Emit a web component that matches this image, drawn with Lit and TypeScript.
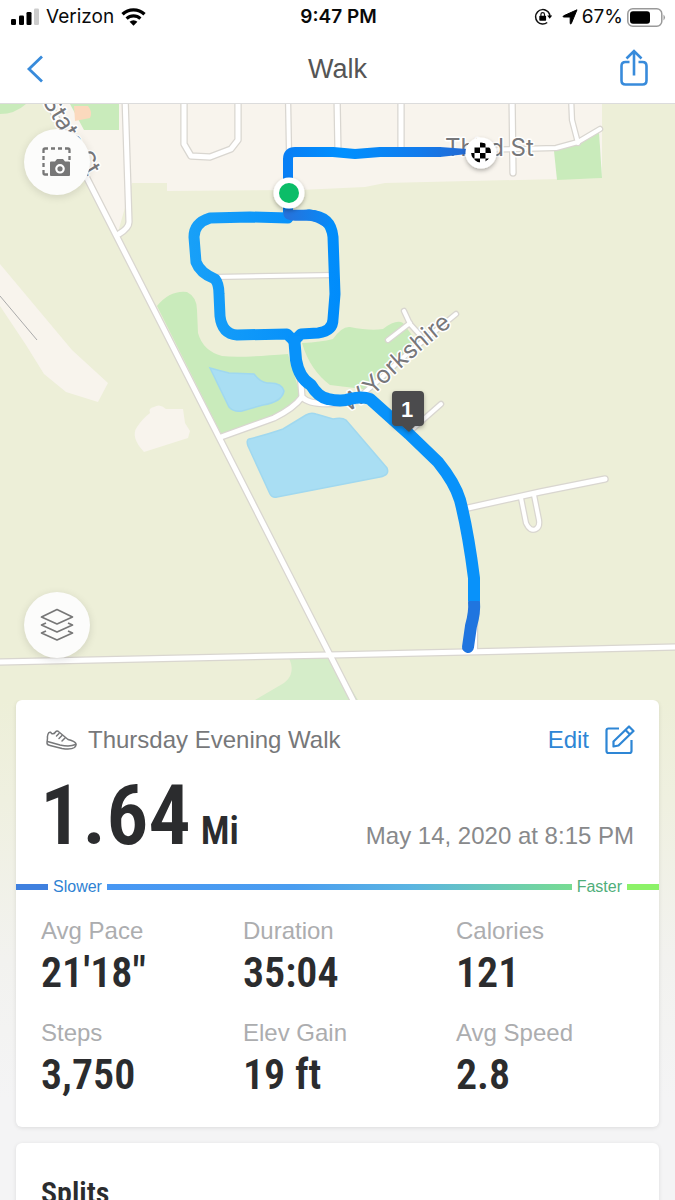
import { LitElement, html, css, svg } from "lit";
import { customElement, property, state } from "lit/decorators.js";

interface Stat {
  label: string;
  value: string;
}

const STATS: Stat[] = [
  { label: "Avg Pace", value: "21'18\"" },
  { label: "Duration", value: "35:04" },
  { label: "Calories", value: "121" },
  { label: "Steps", value: "3,750" },
  { label: "Elev Gain", value: "19 ft" },
  { label: "Avg Speed", value: "2.8" },
];

@customElement("status-bar")
export class StatusBar extends LitElement {
  static styles = css`
    :host {
      display: grid;
      grid-template-columns: 1fr auto 1fr;
      align-items: center;
      height: 34px;
      padding: 0 9px 0 11px;
      font: 400 19px/24px Inter, "Liberation Sans", sans-serif;
      color: #0a0a0a;
      background: #fff;
    }
    .side {
      display: flex;
      align-items: center;
      gap: 7px;
    }
    .end {
      justify-content: flex-end;
      gap: 4px;
    }
    .time {
      font-weight: 600;
    }
    .lock {
      margin-right: 6px;
    }
    svg {
      display: block;
      flex: none;
    }
  `;

  render() {
    return html`
      <div class="side">
        <svg width="28" height="18" viewBox="0 0 28 18" aria-label="Signal">
          <rect x="0" y="11" width="5" height="6" rx="1.3" />
          <rect x="8" y="7.500" width="5" height="9.500" rx="1.300" />
          <rect x="15.500" y="4" width="5" height="13" rx="1.300" />
          <rect x="23" y="0.500" width="5" height="16.500" rx="1.300" fill="#ccc" />
        </svg>
        <span>Verizon</span>
        <svg width="25" height="19" viewBox="0 0 25 19" aria-label="Wi-Fi" fill="none" stroke="#000">
          <path d="M1.500 6.300a15.800 15.800 0 0 1 22 0" stroke-width="3.300" />
          <path d="M5.600 10.600a10 10 0 0 1 13.800 0" stroke-width="3.100" />
          <path d="M8.600 13.800a5.800 5.800 0 0 1 7.800 0L12.500 17.800z" fill="#000" stroke="none" />
        </svg>
      </div>
      <span class="time">9:47 PM</span>
      <div class="side end">
        <svg class="lock" width="18" height="18" viewBox="0 0 18 18" aria-label="Rotation lock">
          <path d="M13.200 3.100A7.200 7.200 0 1 0 13.200 14.500M10 1.800A7.200 7.200 0 0 1 15.900 8.500" fill="none" stroke="#111" stroke-width="1.500" />
          <path d="M13.200 7.600h5l-2.500 3.200z" />
          <rect x="5.300" y="7.800" width="6.800" height="5" rx="0.700" />
          <path d="M6.900 8V6.500a1.800 1.800 0 0 1 3.600 0V8" fill="none" stroke="#111" stroke-width="1.200" />
        </svg>
        <svg width="16" height="16" viewBox="0 0 16 16" aria-label="Location">
          <path d="M15 0.800 9.300 14.500Q8.600 15.800 8.200 14.200V8H1.800Q0.200 7.600 1.600 6.800z" stroke="#000" stroke-linejoin="round" />
        </svg>
        <span>67%</span>
        <svg width="39" height="19" viewBox="0 0 39 19" aria-label="Battery">
          <rect x="0.800" y="0.800" width="34" height="17.400" rx="5" fill="none" stroke="#999" stroke-width="1.500" />
          <rect x="3" y="3.200" width="20" height="12.600" rx="3" />
          <path d="M36.500 6.500q3 3 0 6z" fill="#999" />
        </svg>
      </div>
    `;
  }
}

@customElement("nav-bar")
export class NavBar extends LitElement {
  @property() heading = "";

  static styles = css`
    :host {
      display: grid;
      grid-template-columns: 1fr auto 1fr;
      align-items: center;
      height: 69px;
      padding: 0 24px;
      background: #fff;
      border-bottom: 1px solid #dcdcdc;
      font-family: "Liberation Sans", Arial, sans-serif;
    }
    h1 {
      margin: 0;
      font-size: 27px;
      line-height: 32px;
      font-weight: 400;
      color: #555;
    }
    button {
      display: block;
      padding: 0;
      border: 0;
      background: none;
      color: #388bdb;
      cursor: pointer;
    }
    .share {
      justify-self: end;
    }
    svg {
      display: block;
      fill: none;
      stroke: currentColor;
    }
  `;

  render() {
    return html`
      <button aria-label="Back">
        <svg width="24" height="30" viewBox="0 0 24 30" stroke-width="2.800">
          <path d="M18 2.500 5 15 18 27.500" />
        </svg>
      </button>
      <h1>${this.heading}</h1>
      <button class="share" aria-label="Share">
        <svg width="32" height="40" viewBox="0 0 32 40" stroke-width="2.600">
          <path d="M10.500 13H6.500q-4 0-4 4v14.500q0 4 4 4h17q4 0 4-4V17q0-4-4-4h-4" />
          <path d="M15 26.500V2.500M7.500 9.500 15 2l7.500 7.500" />
        </svg>
      </button>
    `;
  }
}

const ROADS: { d: string; w: number }[] = [
  { d: "M125 96 L129 222 Q129 228 119 234", w: 5 },
  { d: "M184 96 V144 L191 156 L210 157 L231 149 L238 140 V96", w: 5 },
  { d: "M288 96 L289 152", w: 4 },
  { d: "M337 96 L338 152", w: 5 },
  { d: "M401 96 L401 152", w: 5 },
  { d: "M512 96 L513 173", w: 5 },
  { d: "M571 96 L572 120 L578 143", w: 4 },
  { d: "M475 150 L556 148 L578 142 L600 129", w: 4 },
  { d: "M215 277 L335 275", w: 4 },
  { d: "M404 311 L410 324 L420 335 M410 323 L388 340", w: 4 },
  { d: "M360 396 Q380 380 400 360 L456 314", w: 4 },
  { d: "M408 433 L441 404", w: 4 },
  { d: "M300 372 L302 397 Q310 406 340 403 Q358 402 370 396", w: 5 },
  { d: "M221 437 L274 418 Q294 408 302 397", w: 5 },
  { d: "M468 508 L540 492 L605 479", w: 5 },
  { d: "M521 498 L526 523 Q530 532 536 529 Q540 527 539 520 L534 495", w: 4 },
  { d: "M475 590 L475 650", w: 4 },
  { d: "M-4 662 L330 655 L680 647", w: 5 },
  { d: "M40 86 L330 655 L358 710", w: 5 },
];

@customElement("route-map")
export class RouteMap extends LitElement {
  @state() private layersOpen = false;

  static styles = css`
    :host {
      display: block;
      position: relative;
      background: #edefd8;
    }
    .map {
      display: block;
      width: 100%;
      height: auto;
    }
    .casing {
      fill: none;
      stroke: #d9d6d0;
      stroke-linecap: round;
      stroke-linejoin: round;
    }
    .road {
      fill: none;
      stroke: #fff;
      stroke-linecap: round;
      stroke-linejoin: round;
    }
    .urban {
      fill: #f8f4ed;
    }
    .park {
      fill: #c9ebbb;
    }
    .water {
      fill: #a9def3;
      stroke: #a0d8ef;
      stroke-width: 1.5;
    }
    .route {
      fill: none;
      stroke: #0892fa;
      stroke-width: 11;
      stroke-linecap: round;
      stroke-linejoin: round;
    }
    .route-finish {
      stroke: url(#finish);
      stroke-width: 10;
      stroke-linecap: butt;
    }
    .route-loop {
      stroke: url(#loop);
    }
    .route-restart {
      stroke: url(#restart);
    }
    .route-main {
      stroke-width: 12;
      stroke-linecap: butt;
    }
    .route-slow {
      stroke: #2075df;
      stroke-width: 12;
    }
    .place {
      font: 24px Inter, "Liberation Sans", sans-serif;
      fill: #77777a;
      stroke: #fff;
      stroke-width: 3;
      stroke-linejoin: round;
      paint-order: stroke;
    }
    .mile {
      font: 700 22px "Liberation Sans", Arial, sans-serif;
      fill: #fff;
      text-anchor: middle;
    }
    .fab {
      position: absolute;
      left: 24px;
      display: grid;
      place-items: center;
      width: 66px;
      height: 66px;
      padding: 0;
      border: 0;
      border-radius: 50%;
      background: #fcfcfb;
      color: #777;
      box-shadow: 0 2px 8px rgba(0, 0, 0, 0.12);
      cursor: pointer;
    }
    .snapshot {
      top: 25px;
    }
    .layers {
      bottom: 42px;
    }
    .fab svg {
      display: block;
    }
  `;

  render() {
    return html`
      <svg class="map" viewBox="0 104 675 596" role="img" aria-label="Map of the walk">
        <defs>
          <linearGradient id="finish" gradientUnits="userSpaceOnUse" x1="288" y1="0" x2="470" y2="0">
            <stop offset="0" stop-color="#087ff5" />
            <stop offset="0.300" stop-color="#0090ff" />
            <stop offset="0.720" stop-color="#127bec" />
            <stop offset="1" stop-color="#2569d2" />
          </linearGradient>
          <linearGradient id="loop" gradientUnits="userSpaceOnUse" x1="190" y1="0" x2="340" y2="0">
            <stop offset="0" stop-color="#18a0f8" />
            <stop offset="0.700" stop-color="#0791fa" />
            <stop offset="1" stop-color="#008cfb" />
          </linearGradient>
          <linearGradient id="restart" gradientUnits="userSpaceOnUse" x1="288" y1="0" x2="330" y2="0">
            <stop offset="0" stop-color="#2573dc" />
            <stop offset="1" stop-color="#0889f7" />
          </linearGradient>
          <path id="yorkshire" d="M347 412 Q365 403 377 392 Q413 355 466 314" />
          <filter id="shadow" x="-50%" y="-50%" width="200%" height="200%">
            <feDropShadow dx="0" dy="2" stdDeviation="2" flood-opacity="0.300" />
          </filter>
        </defs>
        <rect x="0" y="104" width="675" height="596" fill="#edefd8" />
        <path class="urban" d="M48 104H602V178L385 183 365 187 300 190 167 191V183H132L118 232Z" />
        <path class="urban" d="M0 264 L72 350 L108 383 L98 402 L66 392 L44 374 L26 345 L0 306Z" />
        <path class="urban" d="M150 413 Q148 408 154 407 Q160 403 166 409 L183 409 185 423 190 431 188 438 144 452 Q130 437 137 427 Q143 418 150 413Z" />
        <path d="M0 296 L37 340" stroke="#aaa" stroke-width="1" />
        <path class="park" d="M80 104H119V130H84L70 104Z" />
        <path class="park" d="M0 104H26Q15 114 0 114Z" />
        <path d="M74 106 H88 Q93 112 90 118 L75 121Z" fill="#fbd9bd" />
        <path class="park" d="M554 151 L599 132 L602 178 L557 180Z" />
        <path class="park" d="M157 306 Q170 290 187 292 Q197 297 197 310 L198 333 Q203 351 222 356 Q240 358 288 354 L300 394 Q290 410 270 418 L221 434Z" />
        <path class="park" d="M302 343 Q321 342 333 339 Q342 326 350 327 Q370 331 383 329 Q396 319 403 323 L414 338 L412 350 Q391 377 371 390 L330 385 Q310 370 302 343Z" />
        <path d="M288 656 L331 655 L358 700 H255 L284 683 Q297 673 288 656Z" fill="#d5edc9" />
        <path class="water" d="M210 368 Q217 370 229 373 L254 374 Q260 382 267 383 Q282 382 284 391 Q282 402 263 405 L242 411 Q233 412 229 407Z" />
        <path class="water" d="M249 439 Q269 434 283 429 L306 415 Q311 412 316 414 L333 419 Q342 417 346 420 L387 468 Q390 475 380 477 L277 497 Q272 498 270 494 L248 446 Q246 440 249 439Z" />
        ${ROADS.map((r) => svg`<path class="casing" stroke-width=${r.w + 2.5} d=${r.d} />`)}
        ${ROADS.map((r) => svg`<path class="road" stroke-width=${r.w} d=${r.d} />`)}

        <text class="place" transform="translate(42 101) rotate(59)">State St</text>
        <text class="place" x="445" y="156">Third St</text>
        <text class="place"><textPath href="#yorkshire">W Yorkshire</textPath></text>

        <path d="M440 147 L467 149 V154 L440 157Z" fill="url(#finish)" />
        <path class="route route-finish" d="M288 218 V159 Q288 152 295 152 L333 152 L355 154 L380 152 L441 152" />
        <path class="route route-loop" d="M288 218 L250 217 L210 218 Q194 223 194 237 L196 262 Q200 273 215 279 Q219 284 219 294 L220 316 Q222 334 237 335 L287 334 L294 341 L301 334 L318 333 Q333 331 333 319 L335 294 L333 237 Q331 216 309 215" />
        <path class="route route-restart" d="M289 214 Q291 216 309 215 Q318 216 325 221" />
        <path class="route route-slow" d="M474 602 Q475 612 471 626 L468 647" />
        <path class="route route-main" d="M294 336 L296 360 Q299 378 311 385 Q318 397 328 399 Q341 402 350 399 Q362 396 370 399 L409 434 L438 462 Q455 483 460 500 Q468 531 474 578 L474 601" />

        <g filter="url(#shadow)">
          <circle cx="289" cy="193" r="15.500" fill="#fff" />
          <circle cx="481" cy="153" r="15.500" fill="#fff" />
          <path d="M396 391H420Q424 391 424 395V422Q424 426 420 426H415L409 432 402 426H396Q392 426 392 422V395Q392 391 396 391Z" fill="#4b4b4d" />
        </g>
        <circle cx="289" cy="193" r="10" fill="#0bbd68" />
        <clipPath id="flag"><circle cx="481" cy="152.500" r="10" /></clipPath>
        <g clip-path="url(#flag)">
          <rect x="469" y="141" width="24" height="24" fill="#fff" />
          <path d="M480 142h5.500v5.500h-5.500zM474.500 147.500h5.500v5.500h-5.500zM485.500 147.500h5.500v5.500h-5.500zM469 153h5.500v5.500h-5.500zM480 153h5.500v5.500h-5.500zM474.500 158.500h5.500v5.500h-5.500zM485.500 158.500h5.500v5.500h-5.500z" />
        </g>
        <text class="mile" x="407" y="417">1</text>
      </svg>
      <button class="fab snapshot" aria-label="Take map snapshot">
        <svg width="30" height="30" viewBox="0 0 30 30" fill="none" stroke="currentColor">
          <path d="M1.500 6V3q0-1.500 1.500-1.500H6M9 1.500h4M16 1.500h4M23 1.500h3q1.500 0 1.500 1.500V6M1.500 9v4M1.500 16v4M1.500 23v3q0 1.500 1.500 1.500H6M27.500 9v4" stroke-width="2.300" />
          <path d="M8 15.500q0-1 1-1h4l2-2.500h6l2 2.500h4q1 0 1 1V28q0 1-1 1H9q-1 0-1-1z" fill="currentColor" stroke="none" />
          <circle cx="18" cy="21.800" r="3.700" stroke="#fff" stroke-width="2.200" />
        </svg>
      </button>
      <button
        class="fab layers"
        aria-label="Map layers"
        aria-pressed=${this.layersOpen ? "true" : "false"}
        @click=${() => (this.layersOpen = !this.layersOpen)}
      >
        <svg width="34" height="34" viewBox="0 0 34 34" fill="none" stroke="currentColor" stroke-width="1.700" stroke-linejoin="round">
          <path d="M17 1.500 32.500 9 17 16 1.500 9z" />
          <path d="M6 15 1.500 17 17 24 32.500 17 28 15" />
          <path d="M6 23 1.500 25 17 32 32.500 25 28 23" />
        </svg>
      </button>
    `;
  }
}

@customElement("summary-card")
export class SummaryCard extends LitElement {
  static styles = css`
    :host {
      display: block;
      padding-bottom: 26px;
      border-radius: 6px;
      background: #fff;
      box-shadow: 0 1px 4px rgba(0, 0, 0, 0.1);
      color: #2b2c2e;
      font-family: "Liberation Sans", Arial, sans-serif;
    }
    .title-row {
      display: flex;
      align-items: center;
      justify-content: space-between;
      padding: 24px 24px 0 30px;
    }
    .title {
      display: flex;
      align-items: center;
      gap: 11px;
    }
    h2 {
      margin: 0;
      font-size: 24px;
      line-height: 32px;
      font-weight: 400;
      color: #77787a;
    }
    .edit {
      display: flex;
      align-items: center;
      gap: 16px;
      padding: 0;
      border: 0;
      background: none;
      font: 400 24px/32px "Liberation Sans", Arial, sans-serif;
      color: #2e86d5;
      cursor: pointer;
    }
    svg {
      display: block;
      fill: none;
      stroke: currentColor;
    }
    .shoe {
      color: #77787a;
    }
    .distance-row {
      display: flex;
      align-items: baseline;
      justify-content: space-between;
      padding: 18px 25px 0 24px;
    }
    .distance {
      display: flex;
      align-items: baseline;
      gap: 10px;
      margin: 0;
      font: 600 84px/84px "Roboto Condensed", Roboto, sans-serif;
    }
    .unit {
      font-size: 38px;
    }
    time {
      font-size: 24px;
      color: #88898b;
    }
    .scale {
      display: flex;
      align-items: center;
      gap: 5px;
      margin-top: 4px;
      font-size: 16px;
      line-height: 20px;
      color: #2f82d3;
    }
    .bar {
      height: 6px;
      width: 32px;
      background: #3f80df;
    }
    .mid {
      flex: 1;
      background: linear-gradient(90deg, #4897f3, #4a9df0 40%, #5ab4e2 65%, #77dc92);
    }
    .fastest {
      background: #8cf268;
    }
    .faster {
      color: #4fae7a;
    }
    .stats {
      display: grid;
      grid-template-columns: 202fr 213fr 178fr;
      row-gap: 20px;
      margin: 0;
      padding: 20px 25px 0;
    }
    dt {
      font-size: 24px;
      line-height: 28px;
      color: #acadaf;
    }
    dd {
      margin: 2px 0 0;
      font: 600 42px/52px "Roboto Condensed", Roboto, sans-serif;
    }
  `;

  render() {
    return html`
      <div class="title-row">
        <div class="title">
          <svg class="shoe" width="31" height="20" viewBox="0 0 31 20" stroke-width="1.500" stroke-linejoin="round" stroke-linecap="round">
            <path d="M3 2.500Q1 5 1.500 8L1 13Q1 15 4 15.500L16 18.500Q25 20 28.500 17.500Q31 15 29.500 13Q28 11 22 9.500L13 2Q11 0 9.500 2Q8 4.500 5.500 3.500Q4.500 1.500 3 2.500Z" />
            <path d="M1.500 11.500 14 15Q24 17 29.500 14.500M10.500 6 13 3.500M13 8.500 16 5.500M16 11 19 8" />
          </svg>
          <h2>Thursday Evening Walk</h2>
        </div>
        <button class="edit">
          Edit
          <svg width="30" height="30" viewBox="0 0 30 30" stroke-width="2.200" stroke-linejoin="round">
            <path d="M14 3.500H3.500q-2 0-2 2v20.500q0 2 2 2H24.500q2 0 2-2V15" />
            <path d="M8.500 21.500v-5L24 1.500 28.500 6 13.500 20.500zM20.500 5l4.500 4.500" />
          </svg>
        </button>
      </div>
      <div class="distance-row">
        <p class="distance">1.64 <span class="unit">Mi</span></p>
        <time datetime="2020-05-14T20:15">May 14, 2020 at 8:15 PM</time>
      </div>
      <div class="scale">
        <span class="bar"></span>
        <span>Slower</span>
        <span class="bar mid"></span>
        <span class="faster">Faster</span>
        <span class="bar fastest"></span>
      </div>
      <dl class="stats">
        ${STATS.map((s) => html`<div><dt>${s.label}</dt><dd>${s.value}</dd></div>`)}
      </dl>
    `;
  }
}

@customElement("app-root")
export class AppRoot extends LitElement {
  static styles = css`
    :host {
      display: flex;
      flex-direction: column;
      height: 100vh;
      overflow: hidden;
      background: #f4f4f5;
    }
    status-bar,
    nav-bar {
      flex: none;
    }
    main {
      flex: 1;
      min-height: 0;
      overflow-y: auto;
      scrollbar-width: none;
    }
    .cards {
      display: flex;
      flex-direction: column;
      gap: 16px;
      padding: 0 16px 16px;
      background: linear-gradient(#edefd8, #eff0e0 100px, #f2f2ef 260px, #f4f4f5 400px);
    }
    .splits {
      padding: 34px 25px;
      border-radius: 6px;
      background: #fff;
      box-shadow: 0 1px 4px rgba(0, 0, 0, 0.1);
    }
    h2 {
      margin: 0;
      font: 600 30px/32px "Roboto Condensed", Roboto, sans-serif;
      color: #2b2c2e;
    }
  `;

  render() {
    return html`
      <status-bar></status-bar>
      <nav-bar heading="Walk"></nav-bar>
      <main>
        <route-map></route-map>
        <div class="cards">
          <summary-card></summary-card>
          <section class="splits"><h2>Splits</h2></section>
        </div>
      </main>
    `;
  }
}
